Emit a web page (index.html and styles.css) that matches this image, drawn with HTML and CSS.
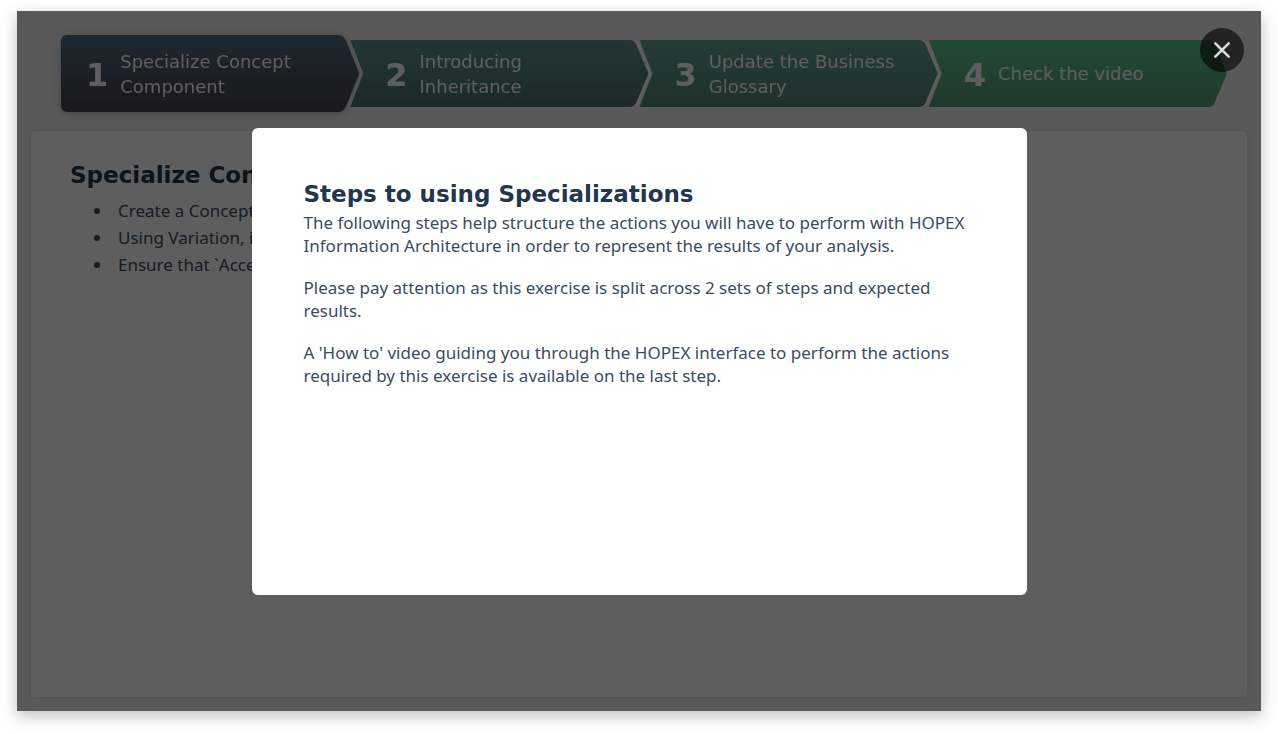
FILE: index.html
```html
<!DOCTYPE html>
<html lang="en">
<head>
<meta charset="utf-8">
<title>Steps to using Specializations</title>
<link rel="stylesheet" href="styles.css">
</head>
<body>
<main class="stage">
  <nav class="steps" aria-label="Exercise steps">
    <a class="step step-current" href="#step-1" aria-current="step"><span class="step-face face-navy"><span class="step-number">1</span><span class="step-label">Specialize Concept Component</span></span></a>
    <a class="step" href="#step-2"><span class="step-face face-teal"><span class="step-number">2</span><span class="step-label">Introducing Inheritance</span></span></a>
    <a class="step" href="#step-3"><span class="step-face face-jade"><span class="step-number">3</span><span class="step-label">Update the Business Glossary</span></span></a>
    <a class="step" href="#step-4"><span class="step-face face-green"><span class="step-number">4</span><span class="step-label">Check the video</span></span></a>
  </nav>
  <section class="panel" id="step-1">
    <h2 class="title">Specialize Concept</h2>
    <ul class="tasks">
      <li>Create a Concept</li>
      <li>Using Variation, in</li>
      <li>Ensure that `Acces</li>
    </ul>
  </section>
  <div class="overlay">
    <div class="dialog" role="dialog" aria-modal="true" aria-labelledby="dialog-title">
      <h2 class="title" id="dialog-title">Steps to using Specializations</h2>
      <p>The following steps help structure the actions you will have to perform with HOPEX Information Architecture in order to represent the results of your analysis.</p>
      <p>Please pay attention as this exercise is split across 2 sets of steps and expected results.</p>
      <p>A 'How to' video guiding you through the HOPEX interface to perform the actions required by this exercise is available on the last step.</p>
    </div>
    <button class="close" type="button" aria-label="Close">
      <svg viewBox="0 0 44 44" aria-hidden="true"><path d="M15.3 15.3 28.7 28.7M28.7 15.3 15.3 28.7"/></svg>
    </button>
  </div>
</main>
</body>
</html>
```
FILE: styles.css
```css
* { box-sizing: border-box; }

body {
  margin: 0;
  padding: 11px 17px 23px;
  min-height: 100vh;
  display: flex;
  background: #fff;
  color: #3a4c62;
  font: 17px/23px "Noto Sans", sans-serif;
}

.stage {
  position: relative;
  flex: 1;
  display: flex;
  flex-direction: column;
  gap: 19px;
  padding: 24px 14px 14px;
  background: #f0f0f0;
  box-shadow: 0 5px 15px rgba(0, 0, 0, 0.25);
}

.steps {
  display: flex;
  align-items: center;
  padding: 0 20px 0 30px;
}

.step {
  flex: 1 1 0;
  margin-right: -9px;
  color: #fff;
  text-decoration: none;
  filter: drop-shadow(3px 0 0 #fff);
}
.step:last-child { margin-right: 0; filter: none; }

.step-current {
  position: relative;
  filter: drop-shadow(0 1px 3px rgba(0, 0, 0, 0.25));
}

.step-face {
  display: flex;
  align-items: center;
  gap: 12px;
  min-height: 67px;
  padding: 0 28px 0 35px;
  clip-path: polygon(0 0, calc(100% - 18px) 0, calc(100% - 15px) 1px, calc(100% - 13px) 3px, calc(100% - 12px) 5px, 100% 50%, calc(100% - 12px) calc(100% - 5px), calc(100% - 13px) calc(100% - 3px), calc(100% - 15px) calc(100% - 1px), calc(100% - 18px) 100%, 0 100%, 13px 50%);
}

.step-current .step-face {
  min-height: 77px;
  padding-left: 25px;
  border-radius: 6px 0 0 6px;
  clip-path: polygon(0 0, calc(100% - 20px) 0, calc(100% - 17px) 1px, calc(100% - 15px) 3px, calc(100% - 13px) 6px, 100% 50%, calc(100% - 13px) calc(100% - 6px), calc(100% - 15px) calc(100% - 3px), calc(100% - 17px) calc(100% - 1px), calc(100% - 20px) 100%, 0 100%);
}

.face-navy { background: linear-gradient(#546c87, #41464c); }
.face-teal { background: linear-gradient(#5c978f, #4e6f6f); }
.face-jade { background: linear-gradient(#61a592, #548477); }
.face-green { background: linear-gradient(#5fc88c, #549a74); }

.step-number { padding-top: 2px; font: bold 32px/38px "DejaVu Sans", sans-serif; }
.step-label { font: 18px/25px "DejaVu Sans", sans-serif; }

.panel {
  flex: 1;
  padding: 28px 39px;
  border-radius: 4px;
  background: #fff;
  box-shadow: 0 0 3px rgba(0, 0, 0, 0.12);
}

.title {
  margin: 0;
  color: #22364d;
  font: bold 23px/32px "DejaVu Sans", sans-serif;
}

.tasks {
  margin: 6px 0 0;
  padding: 0 0 0 24px;
  list-style: none;
  line-height: 27px;
}
.tasks li {
  display: flex;
  align-items: center;
  gap: 18px;
}
.tasks li::before {
  content: "";
  width: 6px;
  height: 6px;
  border-radius: 50%;
  background: #3a4c62;
}

.overlay {
  position: absolute;
  inset: 0;
  display: grid;
  place-items: center;
  background: rgba(0, 0, 0, 0.63);
}

.dialog {
  width: 62.3%;
  min-height: 467px;
  padding: 50px 52px;
  border-radius: 6px;
  background: #fff;
}
.dialog p { margin: 0 0 19px; }
.dialog .title { margin-bottom: 1px; }

.close {
  position: absolute;
  top: 17px;
  right: 17px;
  width: 44px;
  height: 44px;
  padding: 0;
  border: 0;
  border-radius: 50%;
  background: rgba(0, 0, 0, 0.6);
}
.close svg { display: block; fill: none; stroke: #ddd; stroke-width: 2.5; stroke-linecap: round; }
```
